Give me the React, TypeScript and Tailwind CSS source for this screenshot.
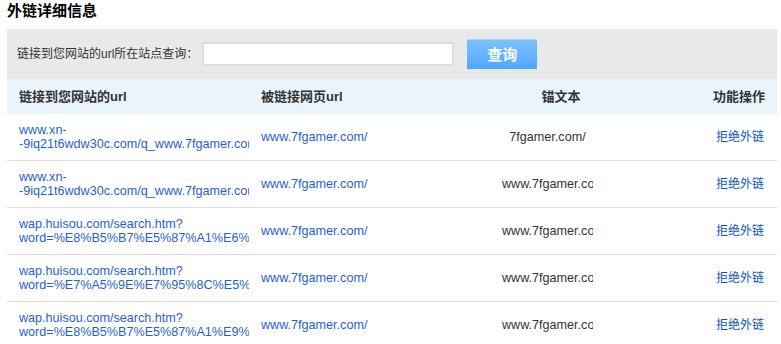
import React from 'react'

// external link detail table
const rows = [
  {
    from: ['www.xn-', '-9iq21t6wdw30c.com/q_www.7fgamer.com/'],
    to: 'www.7fgamer.com/',
    anchor: '7fgamer.com/',
  },
  {
    from: ['www.xn-', '-9iq21t6wdw30c.com/q_www.7fgamer.com/'],
    to: 'www.7fgamer.com/',
    anchor: 'www.7fgamer.com/',
  },
  {
    from: ['wap.huisou.com/search.htm?', 'word=%E8%B5%B7%E5%87%A1%E6%E5%8F%B2'],
    to: 'www.7fgamer.com/',
    anchor: 'www.7fgamer.com/',
  },
  {
    from: ['wap.huisou.com/search.htm?', 'word=%E7%A5%9E%E7%95%8C%E5%8F%B2'],
    to: 'www.7fgamer.com/',
    anchor: 'www.7fgamer.com/',
  },
  {
    from: ['wap.huisou.com/search.htm?', 'word=%E8%B5%B7%E5%87%A1%E9%E5%8F%B2'],
    to: 'www.7fgamer.com/',
    anchor: 'www.7fgamer.com/',
  },
]

const FONT = "font-['Liberation_Sans','Noto_Sans_CJK_SC',sans-serif]"

export default function App() {
  return (
    <div className={`${FONT} bg-white w-[781px] h-[344px] overflow-hidden text-[12px] text-[#333]`}>
      <div className="ml-[7px] w-[770px]">
        {/* Title */}
        <div className="h-[29px] text-[15px] leading-[22px] font-bold text-black">外链详细信息</div>

        {/* Search bar */}
        <div className="h-[50px] bg-[#e9e9e9] flex items-center pl-[10px]">
          <span className="text-[12px] text-[#333]">链接到您网站的url所在站点查询：</span>
          <input
            type="text"
            className="ml-[4px] w-[252px] h-[24px] border-2 border-[#dedede] bg-white outline-none"
          />
          <button className="ml-[13px] w-[70px] h-[30px] border-t border-[#a6d6ff] bg-gradient-to-b from-[#7cc2ff] to-[#4ea6ff] text-white text-[15px] font-bold leading-none">
            查询
          </button>
        </div>

        {/* Header */}
        <div className="grid grid-cols-[242px_253px_98px_1fr] h-[35px] items-center bg-[#e9f4fd] text-[13px] font-bold text-[#333]">
          <div className="pl-[12px]">链接到您网站的url</div>
          <div className="pl-[12px]">被链接网页url</div>
          <div className="pl-[20px] text-center">锚文本</div>
          <div className="pr-[12px] text-right">功能操作</div>
        </div>

        {/* Rows */}
        {rows.map((r, i) => (
          <div
            key={i}
            className="grid grid-cols-[242px_253px_98px_1fr] h-[47px] items-center border-b border-[#dddddd]"
          >
            <div className="pl-[12px]">
              <div className="w-[230px] overflow-hidden whitespace-nowrap text-[12.6px] text-[#1f5fd6] leading-[14px]">
                <div>{r.from[0]}</div>
                <div>{r.from[1]}</div>
              </div>
            </div>
            <div className="pl-[12px] text-[12.6px] text-[#1f5fd6] whitespace-nowrap">{r.to}</div>
            <div>
              <div className="w-[91px] overflow-hidden whitespace-nowrap text-center text-[12.6px] text-[#333]">{r.anchor}</div>
            </div>
            <div className="pr-[13px] text-right text-[#0a52cc]">拒绝外链</div>
          </div>
        ))}
      </div>
    </div>
  )
}
